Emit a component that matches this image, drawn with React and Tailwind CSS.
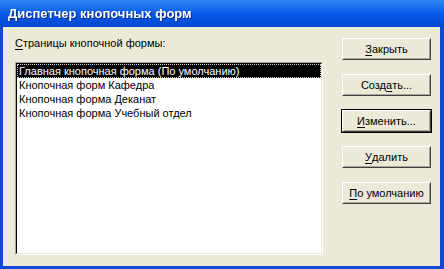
import React from "react";

const font = { fontFamily: '"Liberation Sans", Arial, sans-serif' };

const items = [
  "Главная кнопочная форма (По умолчанию)",
  "Кнопочная форм Кафедра",
  "Кнопочная форма Деканат",
  "Кнопочная форма Учебный отдел",
];

const buttons = [
  { pre: "", key: "З", post: "акрыть" },
  { pre: "Созд", key: "а", post: "ть..." },
  { pre: "", key: "И", post: "зменить...", def: true },
  { pre: "", key: "У", post: "далить" },
  { pre: "", key: "П", post: "о умолчанию" },
];

function XpButton({ pre, k, post, def }) {
  return (
    <div className={def ? "border border-black" : "border border-transparent"}>
      <div className="border border-t-white border-l-white border-r-[#404040] border-b-[#404040]">
        <div className="h-[20px] border border-t-[#ece9d8] border-l-[#ece9d8] border-r-[#aca899] border-b-[#aca899] bg-[#ece9d8] flex items-center justify-center text-[11px] text-black">
          {pre}
          <span className="underline underline-offset-2">{k}</span>
          {post}
        </div>
      </div>
    </div>
  );
}

export default function App() {
  return (
    <div className="w-[444px] h-[269px] flex flex-col select-none" style={font}>
      {/* заголовок окна */}
      <div className="h-[27px] shrink-0 bg-gradient-to-b from-[#2f86f5] via-[#0a5be8] to-[#0047d0] flex items-center pl-[8px]">
        <span className="text-white font-bold text-[13px] drop-shadow-[1px_1px_0_#0b2a8a]">
          Диспетчер кнопочных форм
        </span>
      </div>

      {/* тело окна */}
      <div className="flex-1 flex bg-[#ece9d8] border-l-[3px] border-r-[4px] border-b-[3px] border-[#1148d8]">
        <div className="pl-[12px] pt-[10px] flex flex-col">
          <div className="h-[13px] leading-[13px] text-[11px] text-black">
            <span className="underline underline-offset-2">С</span>траницы кнопочной формы:
          </div>
          <div className="mt-[12px] w-[308px] h-[193px] border border-t-[#aca899] border-l-[#aca899] border-r-white border-b-white">
            <div className="h-full border border-t-black border-l-black border-r-[#ece9d8] border-b-[#ece9d8] bg-white">
              {items.map((t, i) =>
                i === 0 ? (
                  <div
                    key={t}
                    className="h-[14px] bg-black text-white text-[11px] leading-[12px] pl-[1px] border border-dotted border-[#d0d0d0]"
                  >
                    {t}
                  </div>
                ) : (
                  <div key={t} className="h-[14px] text-black text-[11px] leading-[14px] pl-[2px]">
                    {t}
                  </div>
                )
              )}
            </div>
          </div>
        </div>

        <div className="ml-[18px] pt-[10px] w-[91px] flex flex-col gap-[12px]">
          {buttons.map((b) => (
            <XpButton key={b.post} pre={b.pre} k={b.key} post={b.post} def={b.def} />
          ))}
        </div>
      </div>
    </div>
  );
}
